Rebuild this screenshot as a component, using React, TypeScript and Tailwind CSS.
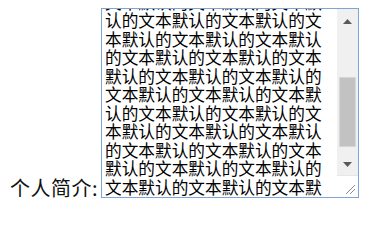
const PATTERN = '默认的文本';
const PER_LINE = 13;

// the box is scrolled, so the first wrapped line sits above the view
const lines = Array.from({ length: 12 }, (_, i) => {
  const start = (i + 1) * PER_LINE;
  return Array.from({ length: PER_LINE }, (_, j) => PATTERN[(start + j) % PATTERN.length]).join('');
});

function Arrow({ down }: { down?: boolean }) {
  return (
    <svg width="9" height="5" viewBox="0 0 9 5" className="block">
      <polygon points={down ? '0,0 9,0 4.5,5' : '0,5 9,5 4.5,0'} fill="#5a5a5a" />
    </svg>
  );
}

function ScrollBar() {
  return (
    <div className="flex w-[21px] shrink-0 flex-col">
      <div className="flex flex-1 flex-col bg-[#f0f0f0]">
        <div className="flex h-[21px] items-center justify-center pt-[3px]">
          <Arrow />
        </div>
        <div className="h-[47px]" />
        <div className="mx-[2px] h-[70px] border border-[#d6d6d6] bg-[#c2c2c2]" />
        <div className="flex-1" />
        <div className="flex h-[21px] items-center justify-center">
          <Arrow down />
        </div>
      </div>
      <div className="flex h-[22px] items-end justify-end border-t border-[#e6e6e6] bg-white p-[2px]">
        <svg width="12" height="12" viewBox="0 0 12 12" className="block">
          <line x1="11" y1="2" x2="2" y2="11" stroke="#8a8a8a" strokeWidth="1" />
          <line x1="11" y1="6" x2="6" y2="11" stroke="#8a8a8a" strokeWidth="1" />
        </svg>
      </div>
    </div>
  );
}

export default function App() {
  return (
    <div className="flex h-[208px] w-[386px] items-end bg-white pb-[10px] pl-[10px] pt-[8px]">
      <label
        className="mb-[-1px] text-[20px] leading-[22px] tracking-[0.5px] text-[#111]"
        style={{ fontFamily: '"Noto Sans CJK SC", "Noto Sans", sans-serif' }}
      >
        个人简介:
      </label>
      <div className="ml-[3px] flex h-[190px] w-[258px] border border-[#7fa4d6] bg-white">
        <div
          className="flex-1 overflow-hidden px-[3px] text-[16.67px] leading-[18.45px] text-black"
          style={{ fontFamily: '"Noto Sans CJK SC", sans-serif' }}
        >
          <div className="mt-[-16px] whitespace-nowrap">
            {lines.map((line, i) => (
              <div key={i}>{line}</div>
            ))}
          </div>
        </div>
        <ScrollBar />
      </div>
    </div>
  );
}
